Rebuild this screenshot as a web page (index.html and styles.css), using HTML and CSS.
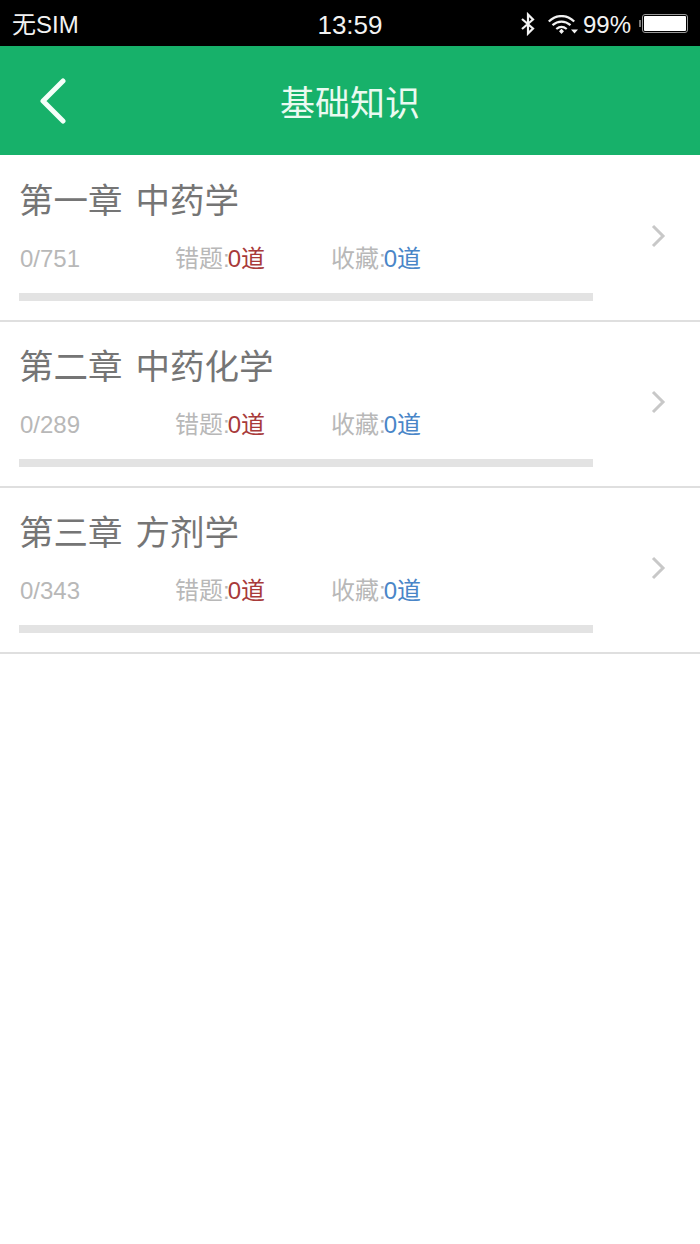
FILE: index.html
```html
<!DOCTYPE html>
<html lang="zh">
<head>
<meta charset="utf-8">
<title>基础知识</title>
<link rel="stylesheet" href="styles.css">
</head>
<body>
<div class="status">
  <span class="carrier">无SIM</span>
  <span class="time">13:59</span>
  <div class="status-right">
    <svg class="bt" width="16" height="24" viewBox="0 0 16 24"><path d="M2 7 L13 16.500 L8 21.500 V2.500 L13 7.500 L2 17" fill="none" stroke="#f2f2f2" stroke-width="2.200"/></svg>
    <svg class="wifi" width="30" height="20" viewBox="0 0 30 20"><path d="M0.800 6.500 C8 -0.800 19 -0.800 26.200 6.500 M4.500 10.200 C10 5.500 17 5.500 22.500 10.200 M8.300 14 C11.500 11.300 15.500 11.300 18.700 14" fill="none" stroke="#f2f2f2" stroke-width="2.200"/><path d="M11 16.200 L13.500 13.800 L16 16.200 L13.500 19 Z M23 14.500 H30 L26.500 18.500 Z" fill="#f2f2f2"/></svg>
    <span class="pct">99%</span>
    <div class="battery"><div class="battery-fill"></div></div>
  </div>
</div>
<header class="nav">
  <svg class="back" width="30" height="46" viewBox="0 0 30 46"><path d="M25 3 L5 23 L25 43" fill="none" stroke="#f4fff9" stroke-width="5" stroke-linecap="round" stroke-linejoin="round"/></svg>
  <h1 class="nav-title">基础知识</h1>
</header>
<main class="list">
  <section class="row">
    <div class="row-body">
      <h2 class="chapter">第一章 中药学</h2>
      <div class="meta">
        <span class="count">0/751</span>
        <span class="stat">错题:<b class="red">0道</b></span>
        <span class="stat">收藏:<b class="blue">0道</b></span>
      </div>
      <div class="bar"></div>
    </div>
    <svg class="chev" width="16" height="24" viewBox="0 0 16 24"><path d="M3 2 L13 12 L3 22" fill="none" stroke="#c8c8c8" stroke-width="3"/></svg>
  </section>
  <section class="row">
    <div class="row-body">
      <h2 class="chapter">第二章 中药化学</h2>
      <div class="meta">
        <span class="count">0/289</span>
        <span class="stat">错题:<b class="red">0道</b></span>
        <span class="stat">收藏:<b class="blue">0道</b></span>
      </div>
      <div class="bar"></div>
    </div>
    <svg class="chev" width="16" height="24" viewBox="0 0 16 24"><path d="M3 2 L13 12 L3 22" fill="none" stroke="#c8c8c8" stroke-width="3"/></svg>
  </section>
  <section class="row">
    <div class="row-body">
      <h2 class="chapter">第三章 方剂学</h2>
      <div class="meta">
        <span class="count">0/343</span>
        <span class="stat">错题:<b class="red">0道</b></span>
        <span class="stat">收藏:<b class="blue">0道</b></span>
      </div>
      <div class="bar"></div>
    </div>
    <svg class="chev" width="16" height="24" viewBox="0 0 16 24"><path d="M3 2 L13 12 L3 22" fill="none" stroke="#c8c8c8" stroke-width="3"/></svg>
  </section>
</main>
</body>
</html>
```
FILE: styles.css
```css
* { box-sizing: border-box; }
html, body { margin: 0; padding: 0; background: #fff; }
body {
  width: 700px;
  height: 1244px;
  overflow: hidden;
  font-family: "Liberation Sans", "Noto Sans CJK SC", sans-serif;
}
.status {
  height: 46px;
  background: #000;
  color: #f2f2f2;
  display: grid;
  grid-template-columns: 1fr auto 1fr;
  align-items: center;
  padding: 0 12px 0 12px;
  font-size: 24px;
}
.carrier { line-height: 28px; height: 28px; display: flex; align-items: center; margin-top: 4px; }
.time { font-size: 26px; line-height: 30px; margin-top: 4px; }
.status-right {
  display: flex;
  align-items: center;
  justify-content: flex-end;
  gap: 4px;
}
.bt { margin-right: 8px; margin-top: 1px; margin-left: 1px; }
.wifi { margin-top: 4px; }
.pct { font-size: 24px; margin-right: 7px; margin-left: 1px; margin-top: 4px; }
.battery {
  width: 46px;
  height: 19px;
  border: 1px solid #999;
  border-radius: 3px;
  padding: 1px;
  position: relative;
}
.battery::before {
  content: "";
  position: absolute;
  left: -4px;
  top: 5px;
  width: 2px;
  height: 7px;
  background: #777;
}
.battery-fill { height: 100%; background: #fff; border-radius: 1px; }
.nav {
  height: 109px;
  background: #17b16a;
  display: flex;
  align-items: center;
  justify-content: center;
  position: relative;
}
.back { position: absolute; left: 38px; top: 32px; }
.nav-title {
  margin: 0;
  font-size: 35px;
  font-weight: 400;
  color: #eafaf1;
}
.list { padding-top: 1px; }
.row {
  height: 166px;
  border-bottom: 2px solid #dfdfdf;
  padding-left: 19px;
  padding-right: 34px;
  display: flex;
  justify-content: space-between;
  align-items: center;
}
.row-body { width: 574px; align-self: flex-start; }
.chapter {
  margin: 0;
  padding-top: 24px;
  height: 64px;
  line-height: 42px;
  font-size: 34.500px;
  font-weight: 400;
  color: #757575;
  word-spacing: 3.500px;
}
.meta {
  display: flex;
  margin-top: 23px;
  height: 32px;
  align-items: baseline;
  line-height: 32px;
  font-size: 24px;
  color: #b8b8b8;
}
.count { width: 156px; padding-left: 1px; }
.stat { width: 156px; white-space: nowrap; }
.stat b { font-weight: 400; margin-left: -2px; }
.red { color: #a83a3a; }
.blue { color: #4a86c8; }
.bar {
  height: 8px;
  margin-top: 18px;
  background: #e3e3e3;
}
.chev { margin-top: -4px; }
```
